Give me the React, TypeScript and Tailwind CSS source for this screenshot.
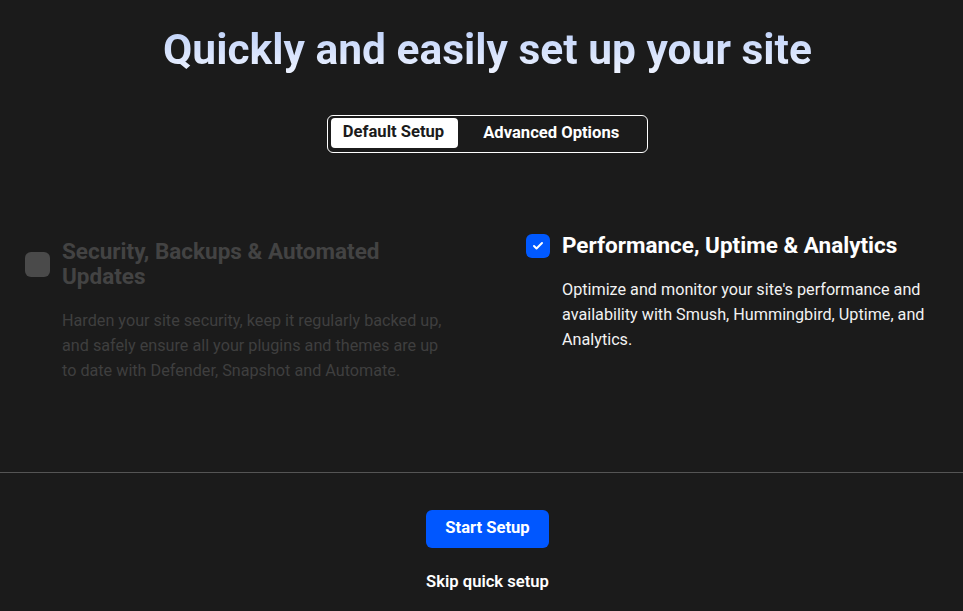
import { Check } from "lucide-react"

const font = { fontFamily: "Roboto, 'Noto Sans', sans-serif" }

function Option({ title, text, checked, muted }: { title: string; text: string; checked: boolean; muted?: boolean }) {
  return (
    <div className="flex flex-col">
      <div className="flex items-center gap-3">
        {checked ? (
          <span className="ml-px flex h-6 w-6 shrink-0 items-center justify-center rounded-[6px] bg-[#0059ff]">
            <Check className="h-3 w-3 text-white" strokeWidth={4} />
          </span>
        ) : (
          <span className="h-[25px] w-[25px] shrink-0 rounded-[6px] bg-[#4a4a4a]" />
        )}
        <h2 className={`text-[22.5px] font-bold leading-[25px] ${muted ? "text-[#434343]" : "text-white"}`}>{title}</h2>
      </div>
      <p className={`mt-[19px] pl-[37px] text-[16.2px] leading-[25px] ${muted ? "text-[#3f3f3f]" : "text-[#f2f2f2]"}`}>{text}</p>
    </div>
  )
}

export default function App() {
  return (
    <div className="flex min-h-[611px] flex-col bg-[#1b1b1b]" style={font}>
      <h1 className="mt-[26px] bg-gradient-to-b from-[#bccff8] to-[#eef3ff] bg-clip-text pl-3 text-center text-[42.5px] font-bold leading-[48px] text-transparent">
        Quickly and easily set up your site
      </h1>
      <div className="mt-[41px] flex justify-center pl-3">
        <div className="flex items-center rounded-[6px] border border-white px-[3px] pb-[4px] pr-[28px] pt-[2px]">
          <button className="rounded-[4px] bg-white pb-[5px] pl-3 pr-[14px] pt-[3px] text-[16.6px] font-bold leading-[22px] text-[#1b1b1b]">Default Setup</button>
          <button className="ml-[25px] text-[16.6px] font-bold leading-[22px] text-white">Advanced Options</button>
        </div>
      </div>
      <div className="mt-[80px] grid grid-cols-[430px_1fr] gap-[70px] pl-[25px] pr-[20px]">
        <div className="mt-[6px]">
          <Option
            muted
            checked={false}
            title="Security, Backups & Automated Updates"
            text="Harden your site security, keep it regularly backed up, and safely ensure all your plugins and themes are up to date with Defender, Snapshot and Automate."
          />
        </div>
        <Option
          checked
          title="Performance, Uptime & Analytics"
          text="Optimize and monitor your site's performance and availability with Smush, Hummingbird, Uptime, and Analytics."
        />
      </div>
      <div className="mt-auto border-t border-[#555] pb-[18px] pt-[37px]">
        <div className="flex flex-col items-center pl-3">
          <button className="rounded-[6px] bg-[#0057ff] px-[19px] pb-[9px] pt-[7px] text-[16.6px] font-bold leading-[22px] text-white">Start Setup</button>
          <button className="mt-[23px] text-[16.6px] font-semibold leading-[22px] text-white">Skip quick setup</button>
        </div>
      </div>
    </div>
  )
}
